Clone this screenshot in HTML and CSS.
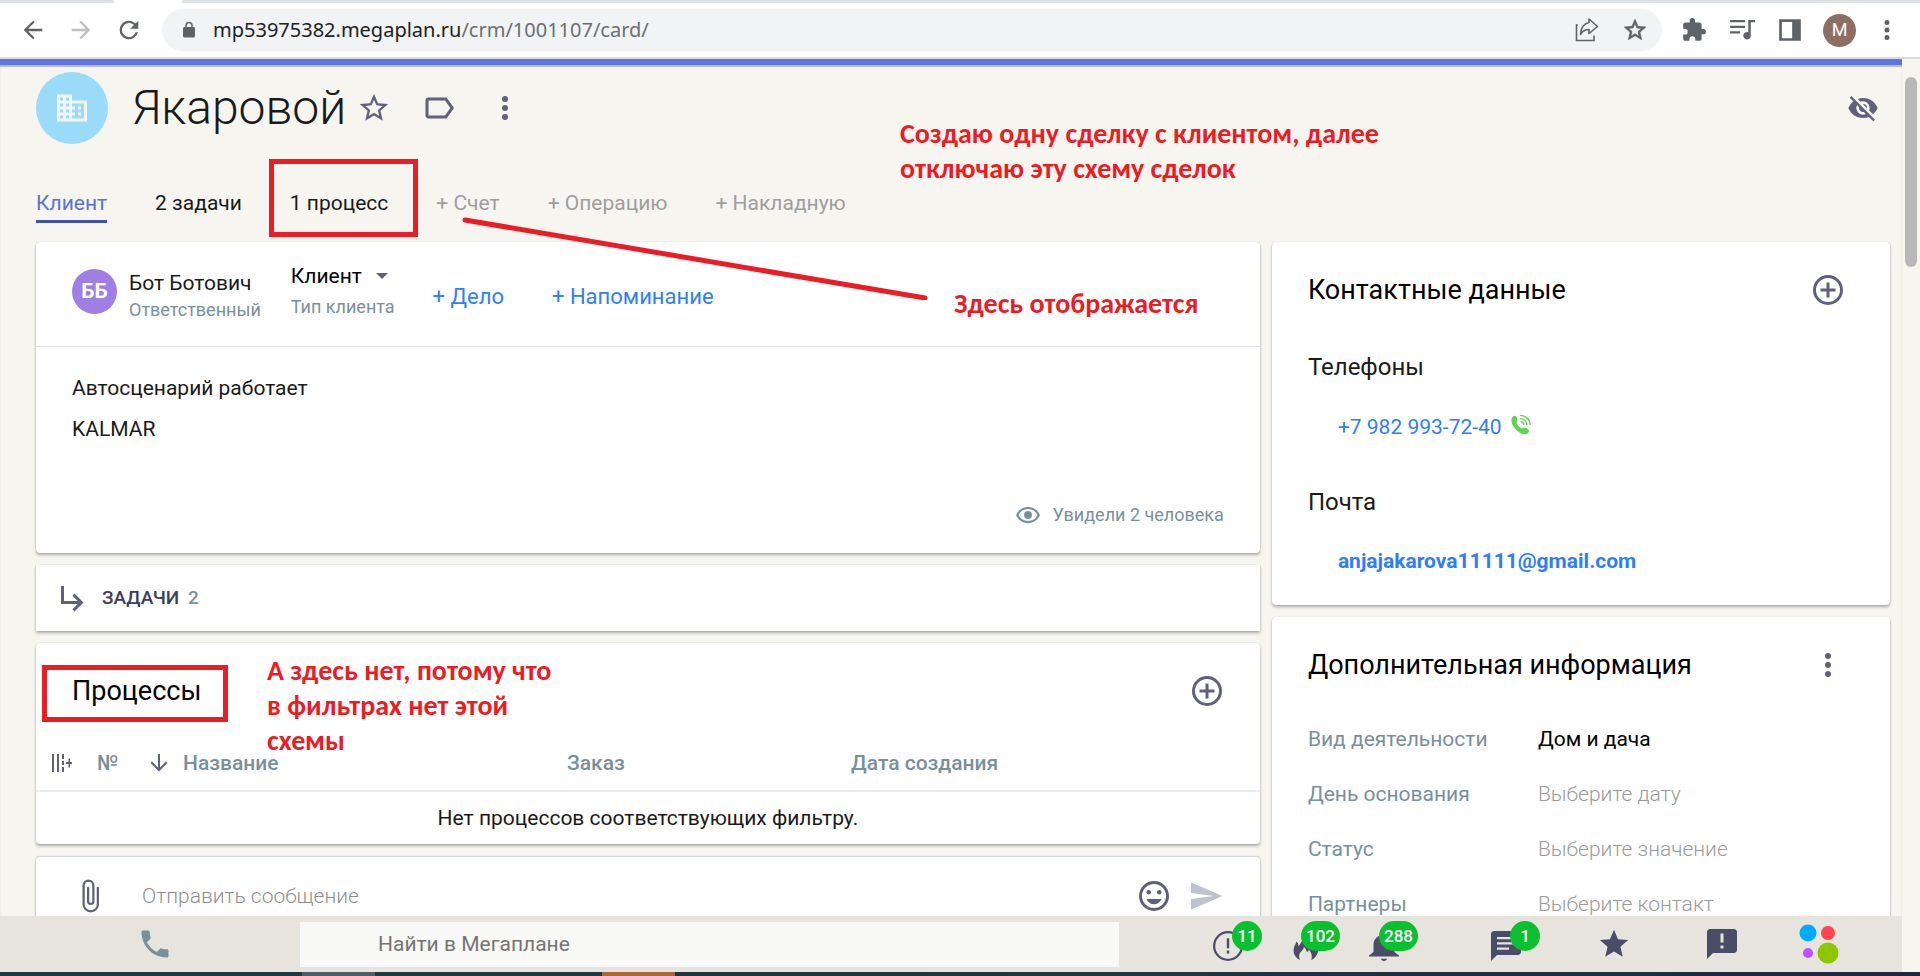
FILE: index.html
```html
<!DOCTYPE html>
<html lang="ru">
<head>
<meta charset="utf-8">
<title>Якаровой</title>
<link rel="stylesheet" href="styles.css">
</head>
<body>
<svg class="defs" aria-hidden="true">
  <symbol id="dots" viewBox="0 0 24 24"><path d="M12 8a2 2 0 1 0 0-4 2 2 0 0 0 0 4zm0 2a2 2 0 1 0 0 4 2 2 0 0 0 0-4zm0 6a2 2 0 1 0 0 4 2 2 0 0 0 0-4z"/></symbol>
  <symbol id="star" viewBox="0 0 24 24"><path d="M22 9.24l-7.19-.62L12 2 9.19 8.63 2 9.24l5.46 4.73L5.82 21 12 17.27 18.18 21l-1.63-7.03L22 9.24zM12 15.4l-3.76 2.27 1-4.28-3.32-2.88 4.38-.38L12 6.1l1.71 4.04 4.38.38-3.32 2.88 1 4.28L12 15.4z"/></symbol>
  <symbol id="star-fill" viewBox="0 0 24 24"><path d="M12 17.27L18.18 21l-1.64-7.03L22 9.24l-7.19-.61L12 2 9.19 8.63 2 9.24l5.46 4.73L5.82 21z"/></symbol>
  <symbol id="plus" viewBox="0 0 24 24"><path d="M13 7h-2v4H7v2h4v4h2v-4h4v-2h-4V7zm-1-5a10 10 0 1 0 0 20 10 10 0 0 0 0-20zm0 18a8 8 0 1 1 0-16 8 8 0 0 1 0 16z"/></symbol>
  <symbol id="phone" viewBox="0 0 24 24"><path d="M6.62 10.79c1.44 2.83 3.76 5.14 6.59 6.59l2.2-2.2c.27-.27.67-.36 1.02-.24 1.12.37 2.33.57 3.57.57.55 0 1 .45 1 1V20c0 .55-.45 1-1 1C10.61 21 3 13.39 3 4c0-.55.45-1 1-1h3.5c.55 0 1 .45 1 1 0 1.25.2 2.45.57 3.57.11.35.03.74-.25 1.02l-2.2 2.2z"/></symbol>
  <symbol id="back" viewBox="0 0 24 24"><path d="M20 11H7.83l5.59-5.59L12 4l-8 8 8 8 1.41-1.41L7.83 13H20v-2z"/></symbol>
</svg>

<div class="tabstrip"><div class="tabstrip-tab"></div></div>
<header class="browser">
  <button class="nav-btn" aria-label="Назад"><svg class="i28"><use href="#back"/></svg></button>
  <button class="nav-btn nav-off" aria-label="Вперёд"><svg class="i28 flip"><use href="#back"/></svg></button>
  <button class="nav-btn" aria-label="Обновить"><svg class="i28" viewBox="0 0 24 24"><path d="M17.65 6.35A7.96 7.96 0 0 0 12 4a8 8 0 1 0 7.73 10h-2.08A6 6 0 1 1 12 6c1.66 0 3.14.69 4.22 1.78L13 11h7V4l-2.35 2.35z"/></svg></button>
  <div class="omnibox">
    <svg class="lock" viewBox="0 0 24 24"><path d="M18 8h-1V6A5 5 0 0 0 7 6v2H6c-1.100 0-2 .9-2 2v10c0 1.100.9 2 2 2h12c1.100 0 2-.9 2-2V10c0-1.100-.9-2-2-2zM9 6a3 3 0 0 1 6 0v2H9V6z"/></svg>
    <a class="url" href="#">mp53975382.megaplan.ru<span class="path">/crm/1001107/card/</span></a>
    <button class="omni-btn" aria-label="Поделиться"><svg class="i26" viewBox="0 0 26 26"><g fill="none" stroke="currentColor" stroke-width="1.600"><path d="M4 8H2.500v15.500H20V18.500"/><path d="M15 5.500V2l8.500 7.500-8.500 7V12.500c-4 0-6.500 1.500-8.500 5C7 11 10 6.500 15 5.500z" stroke-linejoin="round"/></g></svg></button>
    <button class="omni-btn thick" aria-label="В закладки"><svg class="i26"><use href="#star"/></svg></button>
  </div>
  <button class="ext-btn" aria-label="Расширения"><svg class="i26" viewBox="0 0 24 24"><path d="M20.500 11H19V7c0-1.100-.9-2-2-2h-4V3.500a2.500 2.500 0 0 0-5 0V5H4c-1.100 0-2 .9-2 2v3.800h1.500a2.700 2.700 0 0 1 0 5.400H2V20c0 1.100.9 2 2 2h3.800v-1.500a2.700 2.700 0 0 1 5.400 0V22H17c1.100 0 2-.9 2-2v-4h1.500a2.500 2.500 0 0 0 0-5z"/></svg></button>
  <button class="ext-btn" aria-label="Медиа"><svg class="i30" viewBox="0 0 24 24"><path d="M2.500 4h12v1.800h-12zM2.500 8.500h12v1.800h-12zM2.500 13h8v1.800h-8zM17 4h5.500v1.800h-3.500v10.700a3 3 0 1 1-2-2.800z"/></svg></button>
  <button class="ext-btn" aria-label="Боковая панель"><svg class="i26" viewBox="0 0 24 24"><path d="M2 2h20v20H2zM4.500 4.500v15H14v-15z" fill-rule="evenodd"/></svg></button>
  <span class="profile">M</span>
  <button class="ext-btn" aria-label="Меню"><svg class="i30"><use href="#dots"/></svg></button>
</header>

<div class="viewport">
  <div class="page">
    <main class="scroller">
      <div class="title-row">
        <span class="company"><svg class="i36" viewBox="0 0 24 24"><path d="M12 7V3H2v18h20V7H12zM6 19H4v-2h2v2zm0-4H4v-2h2v2zm0-4H4V9h2v2zm0-4H4V5h2v2zm4 12H8v-2h2v2zm0-4H8v-2h2v2zm0-4H8V9h2v2zm0-4H8V5h2v2zm10 12h-8v-2h2v-2h-2v-2h2v-2h-2V9h8v10zm-2-8h-2v2h2v-2zm0 4h-2v2h2v-2z"/></svg></span>
        <h1>Якаровой</h1>
        <button class="icon-btn fav" aria-label="Избранное"><svg class="i34"><use href="#star"/></svg></button>
        <button class="icon-btn tag" aria-label="Метка"><svg class="i36" viewBox="0 0 24 24"><path d="M17.630 5.840C17.270 5.330 16.670 5 16 5L5 5.010C3.900 5.010 3 5.900 3 7v10c0 1.100.9 1.990 2 1.990L16 19c.67 0 1.270-.33 1.630-.84L22 12l-4.370-6.160zM16 17H5V7h11l3.550 5L16 17z"/></svg></button>
        <button class="icon-btn" aria-label="Ещё"><svg class="i36"><use href="#dots"/></svg></button>
        <button class="icon-btn hide-btn" aria-label="Скрыть"><svg class="i32" viewBox="0 0 24 24"><path d="M12 7a5 5 0 0 1 4.640 6.830l2.920 2.920A11.800 11.800 0 0 0 22.990 12C21.260 7.610 16.990 4.500 12 4.500c-1.400 0-2.740.25-3.980.7l2.160 2.160C10.740 7.130 11.350 7 12 7zM2 4.270l2.280 2.280.46.46A11.800 11.800 0 0 0 1 12c1.730 4.390 6 7.500 11 7.500 1.550 0 3.030-.3 4.380-.84l.42.42L19.730 22 21 20.730 3.270 3 2 4.270zM7.530 9.800l1.550 1.550a3 3 0 0 0 3.570 3.570l1.550 1.550A5 5 0 0 1 7.530 9.800zm4.310-.78l3.150 3.150.02-.16a3 3 0 0 0-3-3l-.17.01z"/></svg></button>
      </div>
      <nav class="tabs">
        <a class="tab active" href="#">Клиент</a>
        <a class="tab" href="#">2 задачи</a>
        <a class="tab" href="#">1 процесс</a>
        <a class="tab add" href="#">+ Счет</a>
        <a class="tab add" href="#">+ Операцию</a>
        <a class="tab add" href="#">+ Накладную</a>
      </nav>

      <div class="columns">
        <div class="col">
          <section class="card client">
            <div class="client-head">
              <span class="person">ББ</span>
              <div class="who"><a href="#" class="name">Бот Ботович</a><span class="hint">Ответственный</span></div>
              <div class="kind"><button class="kind-btn">Клиент <svg class="caret" viewBox="0 0 12 6"><path d="M0 0h12L6 6z"/></svg></button><span class="hint">Тип клиента</span></div>
              <button class="link-btn">+ Дело</button>
              <button class="link-btn">+ Напоминание</button>
            </div>
            <div class="client-body">
              <p>Автосценарий работает</p>
              <p>KALMAR</p>
              <div class="seen"><svg class="i26" viewBox="0 0 24 24"><path d="M12 4.500C7 4.500 2.730 7.610 1 12c1.730 4.390 6 7.500 11 7.500s9.270-3.110 11-7.500c-1.730-4.390-6-7.500-11-7.500zm0 13c-3.790 0-7.170-2.130-8.820-5.500a9.770 9.770 0 0 1 17.640 0A9.770 9.770 0 0 1 12 17.500z"/><circle cx="12" cy="12" r="3.600"/></svg>Увидели 2 человека</div>
            </div>
          </section>

          <section class="card tasks">
            <svg class="i36" viewBox="0 0 24 24"><path d="M19 15l-6 6-1.420-1.420L15.170 16H4V4h2v10h9.170l-3.590-3.580L13 9l6 6z"/></svg>
            <h2 class="tasks-title">ЗАДАЧИ <span class="count">2</span></h2>
          </section>

          <section class="card processes">
            <div class="card-head"><h2>Процессы</h2><button class="icon-btn" aria-label="Добавить процесс"><svg class="i36"><use href="#plus"/></svg></button></div>
            <table>
              <thead><tr>
                <th class="c-set"><svg class="cols" viewBox="0 0 20 18"><path d="M0 0h2v18H0zM5 0h2v18H5zM10 0h2v5h-2zM10 7h2v4h-2zM10 13h2v5h-2zM14 8h2.500V4.500h1.500V8H20v2h-2v3.500h-1.500V10H14z"/></svg></th>
                <th class="c-num">№</th>
                <th class="c-name"><span class="sort"><svg class="arrow" viewBox="0 0 18 18"><path d="M8 0h2v13.500l6-6L17.500 9 9 17.500.500 9 2 7.500l6 6z"/></svg>Название</span></th>
                <th class="c-order">Заказ</th>
                <th>Дата создания</th>
              </tr></thead>
              <tbody><tr><td colspan="5">Нет процессов соответствующих фильтру.</td></tr></tbody>
            </table>
          </section>

          <section class="card message">
            <button class="icon-btn" aria-label="Прикрепить"><svg class="i36" viewBox="0 0 24 24"><path d="M16.500 6v11.500a4 4 0 0 1-8 0V5a2.500 2.500 0 0 1 5 0v10.500a1 1 0 0 1-2 0V6H10v9.500a2.500 2.500 0 0 0 5 0V5a4 4 0 0 0-8 0v12.500a5.500 5.500 0 0 0 11 0V6h-1.500z"/></svg></button>
            <input type="text" class="msg-input" placeholder="Отправить сообщение" aria-label="Отправить сообщение">
            <button class="icon-btn" aria-label="Смайлы"><svg class="i36" viewBox="0 0 24 24"><path d="M12 2a10 10 0 1 0 0 20 10 10 0 0 0 0-20zm0 18a8 8 0 1 1 0-16 8 8 0 0 1 0 16z"/><circle cx="8.500" cy="9.500" r="1.500"/><circle cx="15.500" cy="9.500" r="1.500"/><path d="M7 14h10c-.8 2.200-2.700 3.500-5 3.500S7.800 16.200 7 14z"/></svg></button>
            <button class="icon-btn send" aria-label="Отправить"><svg class="i36" viewBox="0 0 24 24"><path d="M2.010 21L23 12 2.010 3 2 10l15 2-15 2z"/></svg></button>
          </section>
        </div>

        <div class="col">
          <section class="card contacts">
            <div class="card-head"><h2>Контактные данные</h2><button class="icon-btn" aria-label="Добавить контакт"><svg class="i36"><use href="#plus"/></svg></button></div>
            <h3>Телефоны</h3>
            <p class="contact"><a href="#">+7 982 993-72-40</a><svg class="call" viewBox="0 0 24 24"><path d="M3.500 2.500C5 1.200 7 2 7.700 4.500c.6 2.200.3 3.500-.7 4.800.8 2.700 3 5.200 5.700 6.500 1.600-1 3.300-1.300 5.500-.2 2.700 1.300 3.200 3.500 1.600 5C18 22.500 14 23 9.500 19.500 4 15.500 1.500 10.500 1.500 6.500c0-1.800.8-3 2-4z"/><g fill="none" stroke="currentColor" stroke-width="1.500"><path d="M11 1.500c6 0 11 4.500 11 10.500"/><path d="M11 5c4 0 7.500 3 7.500 7"/><path d="M11.500 8.500c2 0 3.500 1.500 3.500 3.500"/></g></svg></p>
            <h3>Почта</h3>
            <p class="contact"><a class="mail" href="#">anjajakarova11111@gmail.com</a></p>
          </section>

          <section class="card info">
            <div class="card-head"><h2>Дополнительная информация</h2><button class="icon-btn" aria-label="Действия"><svg class="i36"><use href="#dots"/></svg></button></div>
            <dl>
              <dt>Вид деятельности</dt><dd class="set">Дом и дача</dd>
              <dt>День основания</dt><dd>Выберите дату</dd>
              <dt>Статус</dt><dd>Выберите значение</dd>
              <dt>Партнеры</dt><dd>Выберите контакт</dd>
            </dl>
          </section>
        </div>
      </div>
    </main>

    <footer class="dock">
      <button class="dock-phone" aria-label="Телефон"><svg class="i36"><use href="#phone"/></svg></button>
      <input type="search" class="dock-search" placeholder="Найти в Мегаплане" aria-label="Найти в Мегаплане">
      <div class="dock-group">
        <button class="dock-btn" aria-label="Важное"><span class="mark"><svg class="i36" viewBox="0 0 24 24"><path d="M12 2a10 10 0 1 0 0 20 10 10 0 0 0 0-20zm0 18.500a8.500 8.500 0 1 1 0-17 8.500 8.500 0 0 1 0 17zM11.200 6.800h1.600V13.500h-1.600zM11.200 15h1.600v2h-1.600z"/></svg><span class="badge">11</span></span></button>
        <button class="dock-btn" aria-label="Горящие"><span class="mark"><svg class="i36" viewBox="0 0 24 24"><path d="M8 21.500C4.500 19.500 3 16.500 4 13c.4-1.500 1.300-2.300 1.600-4 1 .8 1.400 2 1.500 3.200C9.500 9 11 6 10.500 3c5 2 6 6 6.500 9 .8-.7 1.200-1.500 1.200-2.500 3 4.500 2.500 9-2.700 12 .8-2.500.5-4.500-1.500-7-.5 1-1 1.500-1.500 1.500-.2-1.500-.8-2.500-2-3.500.2 2.500-2.700 3-3 5.500-.1 1.200 0 2.200.5 3.500z"/></svg><span class="badge">102</span></span></button>
        <button class="dock-btn" aria-label="Уведомления"><span class="mark"><svg class="i36" viewBox="0 0 24 24"><path d="M12 22c1.100 0 2-.7 2-1.500h-4c0 .8.9 1.500 2 1.500zm7-6v-5c0-3.070-2.130-5.640-5.500-6.320V4a1.500 1.500 0 0 0-3 0v.68C7.140 5.360 5 7.920 5 11v5l-3 2.300v.7h20v-.7L19 16z"/></svg><span class="badge">288</span></span></button>
      </div>
      <div class="dock-group wide">
        <button class="dock-btn" aria-label="Сообщения"><span class="mark"><svg class="i36" viewBox="0 0 24 24"><path d="M20 2H4c-1.100 0-2 .9-2 2v18l4-4h14c1.100 0 2-.9 2-2V4c0-1.100-.9-2-2-2zM6 7.500V6h12v1.500zM6 11V9.500h12V11zM6 14.500V13h8v1.500z"/></svg><span class="badge">1</span></span></button>
        <button class="dock-btn" aria-label="Избранное"><svg class="i34"><use href="#star-fill"/></svg></button>
        <button class="dock-btn" aria-label="Отзыв"><svg class="i36" viewBox="0 0 24 24"><path d="M20 2H4c-1.100 0-2 .9-2 2v18l4-4h14c1.100 0 2-.9 2-2V4c0-1.100-.9-2-2-2zm-7 13h-2v-2h2v2zm0-4h-2V5h2v6z"/></svg></button>
      </div>
      <button class="dock-logo" aria-label="Мегаплан"><svg class="logo" viewBox="0 0 40 40"><circle cx="9" cy="9" r="8.500" fill="#00aaff"/><circle cx="29" cy="9" r="7" fill="#ff4550"/><circle cx="9" cy="29" r="5" fill="#c050ff"/><circle cx="29" cy="29" r="10.500" fill="#8bc800"/></svg></button>
    </footer>
  </div>
  <div class="scrollbar"><div class="thumb"></div></div>

  <div class="notes">
    <div class="frame frame-tab"></div>
    <div class="frame frame-title"></div>
    <svg class="pointer" viewBox="0 0 470 84"><path d="M4 4L464 82"/></svg>
    <p class="note note-1">Создаю одну сделку с клиентом, далее<br>отключаю эту схему сделок</p>
    <p class="note note-2">Здесь отображается</p>
    <p class="note note-3">А здесь нет, потому что<br>в фильтрах нет этой<br>схемы</p>
  </div>
</div>
<div class="taskbar"><span class="app app-1"></span><span class="app app-2"></span></div>
</body>
</html>
```
FILE: styles.css
```css
* { box-sizing: border-box; }
body {
  margin: 0;
  height: 100vh;
  display: flex;
  flex-direction: column;
  overflow: hidden;
  background: #f6f5f0;
  color: #1a1a1a;
  font-family: Roboto, "Noto Sans", sans-serif;
  font-size: 21px;
  line-height: 24px;
}
h1, h2, h3, p, dl, dd { margin: 0; font-weight: 400; }
a { color: inherit; text-decoration: none; }
button { display: flex; align-items: center; justify-content: center; padding: 0; border: 0; background: none; font: inherit; color: inherit; cursor: pointer; }
input { border: 0; outline: 0; font: inherit; min-width: 0; }
svg { fill: currentColor; flex: none; }
.defs { display: none; }
.i26 { width: 26px; height: 26px; }
.i28 { width: 28px; height: 28px; }
.i30 { width: 30px; height: 30px; }
.i32 { width: 32px; height: 32px; }
.i34 { width: 34px; height: 34px; }
.i36 { width: 36px; height: 36px; }
.flip { transform: scaleX(-1); }

.tabstrip { flex: none; height: 3px; padding-left: 114px; background: #dee1e6; }
.tabstrip-tab { width: 68px; height: 3px; background: #fff; }
.browser {
  flex: none;
  display: flex;
  align-items: center;
  height: 56px;
  padding: 0 18px;
  border-bottom: 2px solid #dadbda;
  background: #fff;
  color: #5f6368;
}
.nav-btn { width: 30px; margin-right: 18px; }
.nav-off { color: #bdc0c3; }
.omnibox {
  flex: 1;
  display: flex;
  align-items: center;
  height: 42px;
  padding: 0 14px 0 18px;
  margin-right: 17px;
  border-radius: 21px;
  background: #f1f3f4;
}
.lock { width: 18px; height: 18px; margin-right: 15px; }
.url { flex: 1; font-family: "Noto Sans", sans-serif; font-size: 20px; color: #202124; }
.path { color: #6b6f73; }
.omni-btn { width: 26px; margin-left: 22px; }
.thick { stroke: currentColor; stroke-width: 0.6; }
.ext-btn { width: 30px; margin-right: 18px; }
.ext-btn:last-child { margin-right: 0; }
.profile {
  display: flex; align-items: center; justify-content: center;
  width: 33px; height: 33px; margin-right: 16px;
  border-radius: 50%;
  background: #8d6e63; color: #fff; font-size: 18px;
}

.viewport { position: relative; flex: 1; min-height: 0; display: flex; }
.page { flex: 1; min-width: 0; display: flex; flex-direction: column; border-top: 6px solid #6075e0; }
.scroller { flex: 1; min-height: 0; overflow: hidden; padding: 7px 12px 0 36px; box-shadow: inset 0 2px 1px #b9b8b4; }
.scrollbar { flex: none; width: 18px; padding: 18px 3px; }
.thumb { height: 190px; border-radius: 6px; background: #b8b8b8; }

.title-row { display: flex; align-items: center; height: 72px; color: #5f617c; }
.company {
  display: flex; align-items: center; justify-content: center;
  width: 72px; height: 72px; margin-right: 24px;
  border-radius: 50%;
  background: #99dbf9; color: #f4f5f3;
}
h1 { font-size: 48px; line-height: 56px; font-weight: 300; color: #1a1a1a; }
.icon-btn { flex: none; color: #5f617c; }
.fav { margin-left: 11px; margin-right: 30px; }
.tag { margin-right: 30px; }
.hide-btn { margin-left: auto; margin-right: 11px; }

.tabs { display: flex; gap: 48px; margin-top: 40px; }
.tab { height: 39px; padding-top: 7px; }
.active { color: #5c70dc; border-bottom: 3px solid #3f51b5; }
.add { color: #9e9e9e; }

.columns { display: grid; grid-template-columns: 198fr 100fr; gap: 12px; margin-top: 19px; }
.col { display: flex; flex-direction: column; gap: 12px; min-width: 0; }
.card { background: #fff; border-radius: 4px; box-shadow: 0 2px 3px rgba(0, 0, 0, .3), 0 0 1px rgba(0, 0, 0, .2); }

.client-head { display: flex; align-items: center; height: 105px; padding: 0 36px 6px; border-bottom: 1px solid #e2e2e2; }
.person {
  display: flex; align-items: center; justify-content: center;
  width: 45px; height: 45px; margin-right: 12px;
  border-radius: 50%;
  background: #a07fe4; color: #fff; font-weight: 700;
}
.who, .kind { display: flex; flex-direction: column; gap: 3px; }
.who { margin-right: 30px; padding-top: 10px; }
.kind { gap: 7px; margin-right: 38px; }
.name { color: #1a1a1a; }
.kind-btn { justify-content: flex-start; color: #000; }
.caret { width: 12px; height: 6px; margin-left: 14px; color: #5f617c; }
.hint { font-size: 18px; color: #78909c; }
.link-btn { margin-right: 48px; padding-top: 12px; font-size: 22px; color: #2f80f7; }
.client-body { display: flex; flex-direction: column; gap: 17px; padding: 29px 36px 25px; }
.seen { display: flex; align-items: center; justify-content: flex-end; gap: 12px; margin-top: 44px; font-size: 18px; color: #78909c; }

.tasks { display: flex; align-items: center; gap: 11px; height: 66px; padding-left: 19px; color: #5f617c; border-radius: 0; }
h2 { font-size: 27px; line-height: 36px; color: #000; }
h3 { font-size: 24px; line-height: 30px; }
.tasks-title { font-size: 19px; line-height: 24px; font-weight: 500; color: #3d3d5c; }
.count { margin-left: 4px; color: #78909c; }

.card-head { display: flex; align-items: center; justify-content: space-between; padding-right: 34px; }
.processes .card-head { padding: 30px 35px 0 36px; }
table { width: 100%; margin-top: 27px; border-collapse: collapse; table-layout: fixed; }
th { height: 55px; padding: 0; text-align: left; font-weight: 500; color: #78909c; border-bottom: 2px solid #e8edf1; }
.c-set { width: 61px; padding-left: 16px; }
.c-num { width: 53px; }
.c-name { width: 417px; }
.c-order { width: 284px; }
.sort { display: flex; align-items: center; gap: 15px; }
.cols, .arrow { display: block; color: #5f617c; }
.cols { width: 20px; height: 18px; }
.arrow { width: 18px; height: 18px; }
td { height: 53px; padding: 0; text-align: center; }

.message { display: flex; align-items: center; gap: 16px; height: 79px; padding: 0 36px; border-top: 1px solid #d5d6e0; }
.msg-input { flex: 1; padding: 0 0 0 18px; background: none; font-weight: 300; }
.msg-input::placeholder { color: #8e8e8e; opacity: 1; }
.send { color: #c0c2cb; }

.contacts, .info { padding: 30px 10px 32px 36px; }
.contacts h3 { margin-top: 44px; }
.contacts .contact + h3 { margin-top: 47px; }
.contact { display: flex; align-items: center; gap: 8px; margin-top: 32px; padding-left: 30px; color: #2f7df7; }
.call { width: 22px; height: 22px; margin-bottom: 4px; color: #5fd552; }
.contact a { height: 24px; }
.mail { font-weight: 700; }
dl { display: grid; grid-template-columns: 230px 1fr; row-gap: 31px; margin-top: 44px; }
dt { color: #78909c; }
dd { font-weight: 300; color: #9a9a9a; }
.set { font-weight: 400; color: #000; }

.dock { flex: none; display: flex; align-items: center; height: 56px; background: #e7e4de; color: #4a4c68; }
.dock-phone { width: 300px; padding-left: 10px; color: #78909c; }
.dock-search { flex: 1; height: 45px; padding: 0 0 0 78px; background: #f8f8f6; }
.dock-search::placeholder { color: #757575; opacity: 1; }
.dock-group { display: flex; margin-left: 70px; }
.dock-btn { width: 78px; height: 56px; }
.wide { margin-left: 29px; }
.wide .dock-btn { width: 108px; }
.mark { position: relative; display: flex; margin-top: 4px; }
.badge {
  position: absolute;
  right: -16px;
  top: -7px;
  min-width: 30px;
  height: 30px;
  padding: 0 5px;
  border-radius: 15px;
  background: #0bc02f;
  color: #fff;
  font-size: 17px;
  line-height: 30px;
  font-weight: 500;
  text-align: center;
}
.dock-logo { width: 86px; margin-right: 40px; }
.logo { width: 40px; height: 40px; }

.notes { position: absolute; inset: 0; pointer-events: none; }
.frame, .pointer, .note { position: absolute; }
.frame { border: 5px solid #ed1c24; }
.frame-tab { left: 269px; top: 100px; width: 149px; height: 78px; }
.frame-title { left: 42px; top: 606px; width: 186px; height: 57px; }
.pointer { left: 461px; top: 157px; width: 470px; height: 84px; fill: none; stroke: #ed1c24; stroke-width: 5px; stroke-linecap: round; }
.note { font-family: Carlito, Calibri, "Open Sans", sans-serif; font-size: 28px; line-height: 35px; font-weight: 700; color: #ed1c24; white-space: nowrap; }
.note-1 { left: 900px; top: 57px; }
.note-2 { left: 954px; top: 227px; }
.note-3 { left: 267px; top: 594px; }

.taskbar { flex: none; display: flex; height: 4px; padding-left: 302px; background: linear-gradient(90deg, #1f3943, #1f3441 60%, #202742); }
.app { width: 73px; }
.app-1 { background: #4f5d68; margin-right: 227px; }
.app-2 { background: #a9673a; }
```
